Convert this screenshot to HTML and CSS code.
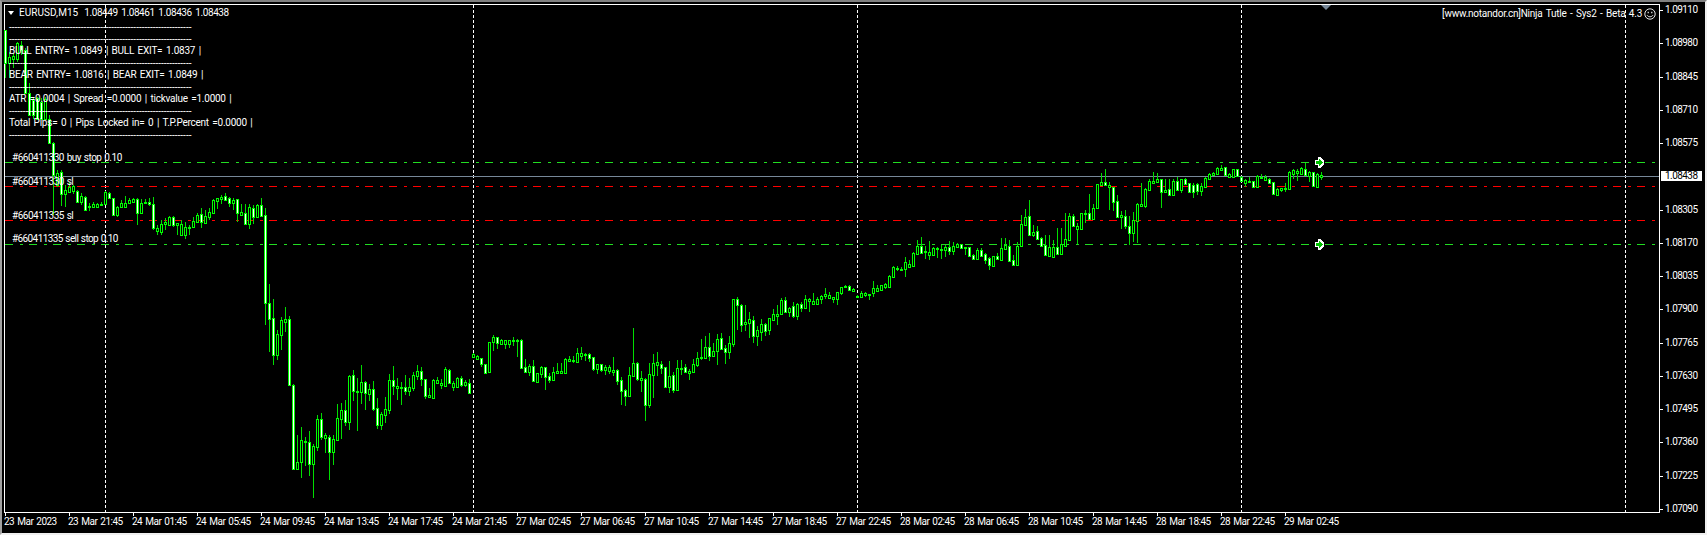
FILE: index.html
```html
<!DOCTYPE html>
<html lang="en">
<head>
<meta charset="utf-8">
<title>EURUSD,M15</title>
<link rel="stylesheet" href="styles.css">
</head>
<body>
<main class="terminal">
  <div class="chart-row">
    <section class="plot">
      <svg id="chart" class="chart-canvas" viewBox="5 5 1654 507" aria-hidden="true"></svg>

      <header class="chart-title">
        <span class="title-arrow"></span>
        <span class="title-symbol">EURUSD,M15</span>
        <span class="title-quotes">1.08449 1.08461 1.08436 1.08438</span>
      </header>

      <div class="ea-name">
        <span>[www.notandor.cn]Ninja Tutle - Sys2 - Beta 4.3</span>
        <svg class="smiley" viewBox="0 0 12 12">
          <circle cx="6" cy="6" r="5.2"/>
          <path d="M3 7.2c1.4 2.1 4.6 2.1 6 0"/>
          <path class="eye" d="M4.2 3.8v1.4M7.8 3.8v1.4"/>
        </svg>
      </div>

      <span class="shift-marker"></span>

      <div class="info-panel">
        <p class="rule">------------------------------------------------------------------</p>
        <p class="rule">------------------------------------------------------------------</p>
        <p>BULL ENTRY= 1.0849 | BULL EXIT= 1.0837 |</p>
        <p class="rule">------------------------------------------------------------------</p>
        <p>BEAR ENTRY= 1.0816 | BEAR EXIT= 1.0849 |</p>
        <p class="rule">------------------------------------------------------------------</p>
        <p>ATR =0.0004 | Spread =0.0000 | tickvalue =1.0000 |</p>
        <p class="rule">------------------------------------------------------------------</p>
        <p>Total Pips= 0 | Pips Locked in= 0 | T.P.Percent =0.0000 |</p>
        <p class="rule">------------------------------------------------------------------</p>
      </div>

      <span class="order-label order-buy">#660411330 buy stop 0.10</span>
      <span class="order-label order-sl-a">#660411330 sl</span>
      <span class="order-label order-sl-b">#660411335 sl</span>
      <span class="order-label order-sell">#660411335 sell stop 0.10</span>
    </section>

    <aside class="price-axis">
      <div class="price">1.09110</div>
      <div class="price">1.08980</div>
      <div class="price">1.08845</div>
      <div class="price">1.08710</div>
      <div class="price">1.08575</div>
      <div class="price current"><span>1.08438</span></div>
      <div class="price">1.08305</div>
      <div class="price">1.08170</div>
      <div class="price">1.08035</div>
      <div class="price">1.07900</div>
      <div class="price">1.07765</div>
      <div class="price">1.07630</div>
      <div class="price">1.07495</div>
      <div class="price">1.07360</div>
      <div class="price">1.07225</div>
      <div class="price">1.07090</div>
    </aside>
  </div>

  <footer class="time-axis">
    <span class="time">23 Mar 2023</span>
    <span class="time">23 Mar 21:45</span>
    <span class="time">24 Mar 01:45</span>
    <span class="time">24 Mar 05:45</span>
    <span class="time">24 Mar 09:45</span>
    <span class="time">24 Mar 13:45</span>
    <span class="time">24 Mar 17:45</span>
    <span class="time">24 Mar 21:45</span>
    <span class="time">27 Mar 02:45</span>
    <span class="time">27 Mar 06:45</span>
    <span class="time">27 Mar 10:45</span>
    <span class="time">27 Mar 14:45</span>
    <span class="time">27 Mar 18:45</span>
    <span class="time">27 Mar 22:45</span>
    <span class="time">28 Mar 02:45</span>
    <span class="time">28 Mar 06:45</span>
    <span class="time">28 Mar 10:45</span>
    <span class="time">28 Mar 14:45</span>
    <span class="time">28 Mar 18:45</span>
    <span class="time">28 Mar 22:45</span>
    <span class="time">29 Mar 02:45</span>
  </footer>
</main>
<script src="chart.js"></script>
</body>
</html>
```

FILE: styles.css
```css
* { box-sizing: border-box; }

html, body {
  margin: 0;
  padding: 0;
  background: #000;
}

.terminal {
  width: 1707px;
  height: 535px;
  padding: 2px 0 0 2px;
  background: #000;
  color: #fff;
  border-style: solid;
  border-width: 2px 2px 2px 2px;
  border-color: #808080 #f0f0f0 #f0f0f0 #a0a0a0;
  font-family: Roboto, "Liberation Sans", Arial, sans-serif;
  font-size: 10px;
  letter-spacing: -0.25px;
  word-spacing: 1.3px;
  line-height: 12px;
  overflow: hidden;
}

.chart-row {
  display: flex;
  height: 509px;
}

.plot {
  position: relative;
  flex: 0 0 1656px;
  height: 509px;
  border: 1px solid #fff;
}

.chart-canvas {
  position: absolute;
  left: 0;
  top: 0;
  width: 1654px;
  height: 507px;
  overflow: visible;
  shape-rendering: crispEdges;
}

.chart-title {
  position: absolute;
  left: 3px;
  top: 2px;
  display: flex;
  align-items: center;
  white-space: pre;
}

.title-arrow {
  width: 0;
  height: 0;
  margin-right: 5px;
  border-style: solid;
  border-width: 4px 3.5px 0 3.5px;
  border-color: #fff transparent transparent transparent;
}

.title-symbol {
  margin-right: 6px;
  letter-spacing: 0.05px;
}

.title-quotes {
  letter-spacing: -0.42px;
  word-spacing: 1.55px;
}

.ea-name {
  position: absolute;
  right: 3px;
  top: 3px;
  display: flex;
  align-items: center;
  gap: 2px;
}

.smiley {
  width: 12px;
  height: 12px;
  fill: none;
  stroke: #fff;
  stroke-width: 0.9;
  shape-rendering: auto;
}

.smiley .eye { stroke-width: 1.1; }

.shift-marker {
  position: absolute;
  left: 1316px;
  top: 0;
  width: 0;
  height: 0;
  border-style: solid;
  border-width: 5px 5px 0 5px;
  border-color: #778899 transparent transparent transparent;
}

.info-panel {
  position: absolute;
  left: 4px;
  top: 15.5px;
}

.info-panel p {
  margin: 0;
  height: 12px;
  white-space: pre;
}

.info-panel .rule {
  letter-spacing: 0;
  line-height: 14px;
}

.order-label {
  position: absolute;
  left: 7px;
  letter-spacing: -0.48px;
  word-spacing: 0.7px;
  white-space: pre;
}

.order-buy { top: 147px; }
.order-sl-a { top: 171px; }
.order-sl-b { top: 205px; }
.order-sell { top: 228px; letter-spacing: -0.6px; }

.price-axis {
  flex: 1;
  display: flex;
  flex-direction: column;
  letter-spacing: -0.55px;
}

.price {
  position: relative;
  flex: 0 0 33.27px;
  padding-left: 5px;
}

.price:last-child { flex-basis: 12px; }

.price::before {
  content: "";
  position: absolute;
  left: 0;
  top: 6px;
  width: 3px;
  height: 1px;
  background: #fff;
}

.price.current::before { display: none; }

.price.current span {
  display: inline-block;
  margin-left: -4px;
  padding: 0 0 0 4px;
  width: 41px;
  background: #fff;
  color: #000;
  line-height: 10px;
  vertical-align: top;
  margin-top: 1px;
}

.time-axis {
  display: flex;
  height: 20px;
  letter-spacing: -0.5px;
  word-spacing: 1px;
}

.time {
  position: relative;
  flex: 0 0 64px;
  padding-top: 3px;
  white-space: pre;
}

.time::before {
  content: "";
  position: absolute;
  left: 1px;
  top: 0;
  width: 1px;
  height: 3px;
  background: #fff;
}
```

FILE: chart.js
```js
// Candles as [wickTop, wickBottom, bodyTop, bodyBottom, bearFilled], read in
// groups that share a vertical origin (y = origin + value / 3); x advances by 4.
var groups = [
  { x: 5, origin: 0, c: [
    [90,235,90,190,1],[155,235,170,190,0],[160,205,168,178,0],[125,185,130,178,0],[122,165,135,150,1],
    [144,278,150,278,1],[248,345,278,345,1],[290,358,300,345,1],[290,358,295,358,1],[295,358,305,358,1],
    [290,360,298,358,0],[345,430,358,428,1],[425,645,428,525,1],[510,560,518,555,0],[510,618,515,582,1],
    [555,620,570,582,0],[545,580,560,575,0],[555,582,558,572,0],[570,607,572,605,1],[578,615,588,605,0],
    [588,632,590,630,1],[610,632,618,622,0],[605,625,613,620,0],[610,625,613,620,0],[605,618,612,616,0],
    [572,615,577,612,0],[575,598,578,595,1],[595,648,595,645,1],[618,650,620,645,0],[600,622,610,620,0],
    [588,622,608,620,0],[595,612,600,610,0],[595,607,598,605,0],[595,675,598,638,1],[598,642,610,640,0],
    [598,612,607,610,0],[595,618,607,612,1],[590,690,612,685,1],[675,705,685,692,0],[660,705,672,695,0],
    [655,690,665,672,0],[648,678,652,675,0],[648,680,652,675,1],[668,705,670,675,0],[660,708,672,705,0],
    [665,718,682,705,0],[675,705,680,685,0],[650,685,662,682,0],[640,668,645,665,0]
  ]},
  { x: 201, origin: 180, c: [
    [85,143,103,125,1],[90,130,108,128,0],[85,120,97,110,0],[58,102,60,100,0],[55,88,55,63,0],
    [45,72,52,57,0],[40,62,48,60,1],[50,82,54,68,1],[55,90,60,68,0],[58,125,58,98,1],
    [72,108,97,105,0],[72,132,100,131,1],[72,147,81,131,0],[75,132,84,110,1],[72,112,75,110,0],
    [54,108,75,107,1],[85,435,105,370,1],[312,515,370,416,1],[357,555,415,525,1],[450,540,462,525,0],
    [410,510,420,464,0],[380,455,418,426,0],[408,616,418,614,1]
  ]},
  { x: 293, origin: 310, c: [
    [222,480,225,478,1],[375,480,455,478,0],[350,504,390,456,0],[380,468,393,396,0],[363,498,397,462,1],
    [402,564,408,462,0],[316,422,328,410,0],[310,390,328,380,1],[370,430,375,383,0],[376,510,382,425,1],
    [376,465,388,425,0],[282,388,325,390,0],[280,388,300,326,0],[270,348,301,335,1],[195,360,198,335,0],
    [180,273,196,242,1],[205,362,243,245,0],[165,283,217,245,0],[213,300,217,250,1],[222,273,238,252,0],
    [213,303,238,296,1],[264,357,295,345,1],[305,360,313,345,0],[262,338,298,315,0],[193,312,210,299,0],
    [168,255,211,227,1],[205,270,229,233,0],[216,285,232,233,0],[195,255,230,242,1],[205,258,232,242,0],
    [186,242,196,233,0],[165,210,184,198,0],[170,228,184,208,1],[208,266,208,257,1],[235,262,255,260,0],
    [208,267,210,263,0],[200,222,210,218,0],[207,237,218,226,0],[171,232,178,227,0],[178,222,181,220,1],
    [213,243,220,230,0],[201,232,203,230,0],[198,230,205,225,1],[210,232,216,224,0],[207,250,218,248,1],
    [130,142,133,141,0],[135,148,138,146,0],[143,172,145,161,1],[162,189,163,188,1],[95,187,97,185,0],
    [75,122,82,97,0],[80,118,82,100,1]
  ]},
  { x: 501, origin: 240, c: [
    [298,315,300,311,0],[300,327,300,311,0],[300,323,300,311,0],[292,318,299,303,0],[297,350,299,302,0],
    [298,386,300,383,1],[357,397,382,395,1],[372,408,378,395,0],[360,425,378,423,1],[398,427,400,425,0],
    [378,415,380,403,0],[380,450,382,410,1],[400,430,408,420,1],[380,422,397,420,0],[370,402,393,399,0],
    [370,400,393,398,0],[355,402,358,400,0],[348,366,358,364,0],[348,368,360,362,0],[323,369,340,367,0],
    [322,360,340,347,0],[338,362,343,346,0],[340,365,343,353,1],[350,392,352,387,1],[372,402,373,387,0],
    [371,395,373,389,1],[375,405,382,389,0],[375,402,382,392,0],[351,408,391,396,0],[387,435,390,422,1],
    [411,495,420,452,1],[447,498,451,467,1],[380,470,405,468,0],[265,412,370,408,0],[367,422,370,417,1],
    [393,456,415,419,0],[415,543,418,495,1],[370,503,403,495,0],[343,473,370,405,0],[336,408,367,374,0],
    [363,402,373,384,1],[380,444,382,441,1],[363,459,408,441,0],[396,459,405,450,1],[360,450,385,450,0],
    [360,405,384,388,0],[372,400,382,395,1],[388,420,393,398,0],[358,397,373,396,0],[336,380,355,374,0],
    [297,360,352,355,0],[288,355,322,353,0],[280,363,320,347,1],[308,350,334,347,0],[282,375,298,332,0],
    [280,330,295,326,1],[315,372,325,335,1],[288,357,310,335,0],[176,320,178,311,0],[171,270,178,194,1],
    [193,276,194,254,1],[195,273,247,251,0],[217,293,238,248,0],[228,308,241,287,1],[258,318,271,287,0],
    [237,302,253,275,0],[250,288,253,273,1],[233,285,235,270,0],[207,242,223,240,0],[195,255,223,227,0],
    [175,222,180,221,0],[172,218,179,215,1],[200,232,203,216,0],[186,234,199,228,1],[190,240,193,227,0],
    [185,216,193,204,1],[165,205,178,203,0],[173,216,178,184,0],[159,192,184,191,0],[172,195,178,191,0],
    [165,192,167,177,0],[144,177,163,167,0],[156,177,166,173,0],[172,190,172,176,0],[155,195,157,177,0],
    [140,165,142,158,0],[136,145,139,142,0],[136,150,139,149,1],[143,153,148,152,0],[165,172,168,170,0],
    [153,175,160,171,0],[155,170,160,166,0],[162,180,163,165,0],[123,170,145,160,0],[135,153,145,152,0],
    [135,152,136,150,0],[128,147,132,141,0],[106,143,108,141,0],[78,113,82,110,0],[78,93,84,88,0]
  ]},
  { x: 901, origin: 140, c: [
    [380,392,386,389,0],[350,410,367,388,0],[360,385,372,380,0],[335,380,340,378,0],[300,344,318,342,0],
    [292,340,318,339,1],[318,358,333,335,0],[303,360,337,344,0],[322,346,325,345,0],[322,355,323,326,0],
    [315,358,326,328,0],[315,350,322,330,0],[303,345,322,332,1],[307,345,317,332,0],[308,323,312,320,0],
    [311,326,313,324,1],[320,345,322,323,0],[320,350,322,348,1],[342,358,346,356,1],[325,360,331,357,0],
    [325,348,330,347,1],[338,372,343,359,1],[352,390,355,374,1],[347,378,349,377,0],[340,360,348,358,1],
    [295,360,324,359,0],[294,330,314,326,0],[300,362,317,362,1],[345,378,361,375,1],[305,376,317,375,0],
    [225,318,252,317,0],[207,256,232,255,0],[180,288,228,285,1],[255,290,275,285,0],[258,300,273,298,1],
    [290,318,295,317,1],[285,347,316,345,1],[285,352,320,348,0],[300,352,322,350,0],[264,345,322,342,1],
    [264,343,313,342,0],[220,318,298,317,0],[218,300,229,299,0],[222,262,229,258,1],[250,313,258,268,0],
    [218,270,220,268,0],[210,250,218,222,0],[163,238,220,236,1],[192,238,203,236,0],[131,205,133,203,0],
    [100,130,127,135,0],[88,138,127,136,1],[125,210,136,142,0],[140,212,142,185,1],[165,233,184,230,1],
    [213,267,226,230,0],[210,267,227,258,1],[228,315,257,278,1],[215,305,241,278,0],[190,310,193,242,0],
    [130,198,193,197,0],[145,205,148,197,0],[118,150,124,149,0],[95,132,124,128,0],[100,128,118,125,0],
    [117,204,118,155,1],[118,158,150,156,0],[118,165,148,164,1],[118,166,124,165,0],[110,152,124,150,1],
    [117,160,118,150,0],[115,135,118,132,1],[128,158,130,155,1],[130,174,135,157,1],[130,165,133,153,1],
    [130,168,138,152,0],[112,142,114,140,0],[98,118,103,116,0],[96,108,100,104,0],[82,105,85,103,0],
    [75,93,83,90,0],[80,108,82,106,1],[100,113,103,110,0],[87,113,88,112,0],[87,108,88,107,1],
    [108,125,110,122,1],[118,142,121,128,0],[112,130,124,127,0],[122,142,123,140,1],[106,141,108,140,0],
    [102,115,110,113,0],[105,120,112,119,0],[115,132,118,130,1],[125,165,127,162,1],[145,166,148,164,0],
    [143,155,145,149,0],[128,155,145,147,0],[92,148,95,146,0],[87,118,91,101,0],[88,122,94,98,0],
    [82,103,85,102,0],[68,108,86,105,1],[92,125,97,108,0],[95,140,97,137,1],[100,142,103,140,0]
  ]},
  { x: 1321, origin: 0, c: [[516,540,526,531,0]] }
];

var NS = "http://www.w3.org/2000/svg";
var svg = document.getElementById("chart");

function rect(x, y, w, h, fill) {
  var r = document.createElementNS(NS, "rect");
  r.setAttribute("x", x);
  r.setAttribute("y", y);
  r.setAttribute("width", w);
  r.setAttribute("height", h);
  r.setAttribute("fill", fill);
  svg.appendChild(r);
}

function hline(y, x1, x2, color, dash) {
  var l = document.createElementNS(NS, "line");
  l.setAttribute("x1", x1);
  l.setAttribute("x2", x2);
  l.setAttribute("y1", y + 0.5);
  l.setAttribute("y2", y + 0.5);
  l.setAttribute("stroke", color);
  if (dash) l.setAttribute("stroke-dasharray", dash);
  svg.appendChild(l);
}

function vline(x) {
  var l = document.createElementNS(NS, "line");
  l.setAttribute("x1", x + 0.5);
  l.setAttribute("x2", x + 0.5);
  l.setAttribute("y1", 5);
  l.setAttribute("y2", 512);
  l.setAttribute("stroke", "#fff");
  l.setAttribute("stroke-dasharray", "3 2");
  svg.appendChild(l);
}

[105, 473, 857, 1241, 1625].forEach(vline);

var DASH = "8 7 3 6";
hline(162, 5, 1655, "#22dd22", DASH);
hline(186, 5, 1655, "#ff0000", DASH);
hline(220, 5, 1655, "#ff0000", DASH);
hline(244, 5, 1655, "#22dd22", DASH);
hline(176, 5, 1659, "#778899");

var LIME = "#00ff00";
groups.forEach(function (g) {
  g.c.forEach(function (k, i) {
    var x = g.x + i * 4;
    var hi = Math.round(g.origin + k[0] / 3);
    var lo = Math.round(g.origin + k[1] / 3);
    var top = Math.round(g.origin + k[2] / 3);
    var bot = Math.round(g.origin + k[3] / 3);
    if (bot <= top) bot = top + 1;
    rect(x, hi, 1, Math.max(lo - hi, 1), "#00dd00");
    rect(x - 1, top, 3, bot - top + 1, LIME);
    if (bot - top >= 2) {
      rect(x, top + 1, 1, bot - top - 1, k[4] ? "#ffffff" : "#000000");
    }
  });
});

function polygon(points, fill) {
  var p = document.createElementNS(NS, "polygon");
  p.setAttribute("points", points.map(function (q) { return q[0] + "," + q[1]; }).join(" "));
  p.setAttribute("fill", fill);
  svg.appendChild(p);
}

function marker(cy) {
  polygon([[1315,cy-2],[1318,cy-2],[1318,cy-5],[1320,cy-5],[1324,cy-1],
           [1324,cy+2],[1320,cy+6],[1318,cy+6],[1318,cy+3],[1315,cy+3]], "#fff");
  polygon([[1316,cy-1],[1319,cy-1],[1319,cy-3],[1323,cy+0.5],[1319,cy+4],[1319,cy+2],[1316,cy+2]], "#00c000");
}

marker(162);
marker(244);
```
